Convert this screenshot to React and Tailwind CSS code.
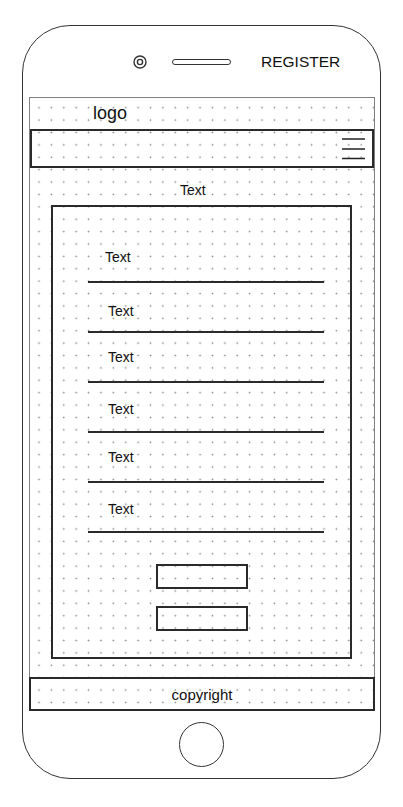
import React from 'react';

// form rows: top padding + left padding of each label, tuned per row
const fields = [
  { pt: 'pt-[16px]', pl: 'pl-[17px]' },
  { pt: 'pt-[20px]', pl: 'pl-[20px]' },
  { pt: 'pt-[16px]', pl: 'pl-[20px]' },
  { pt: 'pt-[18px]', pl: 'pl-[20px]' },
  { pt: 'pt-[16px]', pl: 'pl-[20px]' },
  { pt: 'pt-[18px]', pl: 'pl-[20px]' },
];

const Camera = () => (
  <svg width="14" height="14" viewBox="0 0 14 14" className="shrink-0">
    <circle cx="7" cy="7" r="6" fill="none" stroke="#333" strokeWidth="1.4" />
    <circle cx="7" cy="7" r="2.6" fill="none" stroke="#333" strokeWidth="1.4" />
  </svg>
);

const Hamburger = () => (
  <svg width="23" height="22" viewBox="0 0 23 22">
    <line x1="0" y1="1" x2="23" y2="1" stroke="#222" strokeWidth="1.5" />
    <line x1="0" y1="11" x2="23" y2="11" stroke="#222" strokeWidth="1.5" />
    <line x1="0" y1="20.5" x2="23" y2="20.5" stroke="#222" strokeWidth="1.5" />
  </svg>
);

const App = () => {
  return (
    <div className="w-[403px] h-[807px] bg-white pt-[25px] pl-[22px] font-['Liberation_Sans',Arial,sans-serif] text-[#111] overflow-hidden">
      {/* phone frame */}
      <div className="w-[359px] h-[754px] border border-[#333] rounded-[48px] flex flex-col">
        {/* top: camera, speaker, register */}
        <div className="h-[71px] flex items-center pl-[110px]">
          <Camera />
          <div className="ml-[25px] w-[59px] h-[6px] rounded-full border-[1.5px] border-[#333]" />
          <span className="ml-[30px] text-[15.5px] leading-none">REGISTER</span>
        </div>

        {/* screen */}
        <div className="ml-[6px] w-[346px] flex flex-col border-t border-x border-[#808080] bg-[radial-gradient(circle,#8a8a8a_0.7px,transparent_1.1px)] bg-[length:12.4px_12.4px] bg-[position:2.8px_3.5px]">
          <div className="h-[31px] pl-[63px] pt-[6px] text-[18px] leading-[19px]">logo</div>

          <div className="h-[39px] border-2 border-[#2a2a2a] flex items-center justify-end pr-[7px]">
            <Hamburger />
          </div>

          <div className="h-[37px] pl-[150px] pt-[14px] text-[14px] leading-[16px]">Text</div>

          {/* form box */}
          <div className="ml-[21px] w-[301px] border-2 border-[#2a2a2a] flex flex-col pt-[26px] pb-[26px]">
            {fields.map((f, i) => (
              <div key={i} className={`ml-[35px] w-[236px] h-[50px] border-b-2 border-[#2a2a2a] text-[14px] leading-[16px] ${f.pt} ${f.pl}`}>
                Text
              </div>
            ))}
            <div className="mt-[31px] mx-auto w-[92px] h-[25px] border-2 border-[#2a2a2a]" />
            <div className="mt-[17px] mx-auto w-[92px] h-[25px] border-2 border-[#2a2a2a]" />
          </div>

          <div className="mt-[18px] -mx-px h-[34px] border-2 border-[#2a2a2a] flex items-center justify-center text-[15px] leading-none">
            copyright
          </div>
        </div>

        {/* home button */}
        <div className="mt-[11px] mx-auto w-[45px] h-[45px] rounded-full border border-[#333]" />
      </div>
    </div>
  );
};

export default App;
